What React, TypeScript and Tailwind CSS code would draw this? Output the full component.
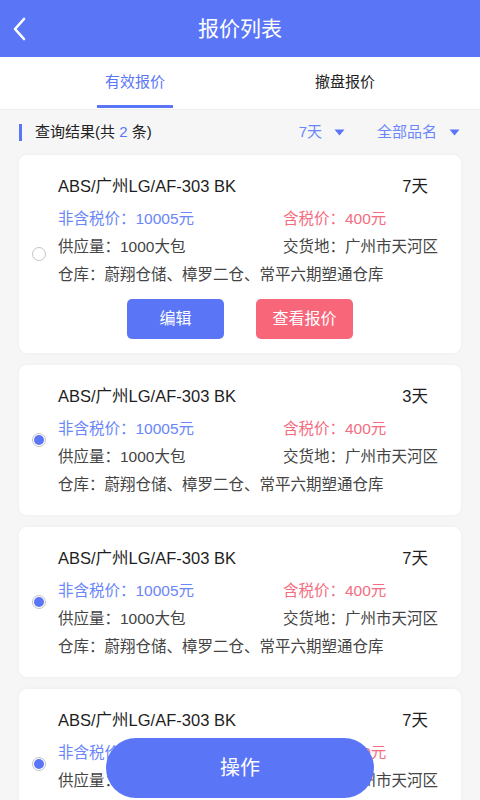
import React from "react";

const font = { fontFamily: '"Liberation Sans", "Noto Sans CJK SC", sans-serif' };

function Triangle() {
  return (
    <svg width="11" height="7" viewBox="0 0 11 7" className="ml-[12px]">
      <path d="M0.5 0.5 L10.5 0.5 L5.5 6.5 Z" fill="#5a76f7" />
    </svg>
  );
}

function Radio({ checked }: { checked: boolean }) {
  return (
    <div className="w-[14px] h-[14px] rounded-full border border-[#c4c4c4] bg-white flex items-center justify-center">
      {checked && <div className="w-[10px] h-[10px] rounded-full bg-[#5a76f7]" />}
    </div>
  );
}

function Card({ days, checked, buttons }: { days: string; checked: boolean; buttons?: boolean }) {
  return (
    <div className="bg-white rounded-[8px] shadow-[0_0_4px_rgba(0,0,0,0.04)] flex">
      <div className="w-[39px] shrink-0 flex items-center justify-center">
        <Radio checked={checked} />
      </div>
      <div className="flex-1 min-w-0 pt-[17px] pb-[14px] pr-[33px]">
        <div className="h-[28px] flex items-center justify-between text-[16.5px] text-[#1e1e1e]">
          <span>ABS/广州LG/AF-303 BK</span>
          <span>{days}</span>
        </div>
        <div className="mt-[5px] grid grid-cols-[225px_1fr] text-[15.5px] whitespace-nowrap">
          <div className="h-[28px] flex items-center text-[#6a86f7]">非含税价：10005元</div>
          <div className="h-[28px] flex items-center text-[#f46d7f]">含税价：400元</div>
          <div className="h-[28px] flex items-center text-[#444]">供应量：1000大包</div>
          <div className="h-[28px] flex items-center text-[#444]">交货地：广州市天河区</div>
          <div className="h-[28px] flex items-center text-[#444] col-span-2">仓库：蔚翔仓储、樟罗二仓、常平六期塑通仓库</div>
        </div>
        {buttons ? (
          <div className="mt-[10px] flex pl-[69px] gap-[32px]">
            <div className="w-[97px] h-[40px] rounded-[5px] bg-[#5a76f7] text-white text-[16px] flex items-center justify-center">编辑</div>
            <div className="w-[97px] h-[40px] rounded-[5px] bg-[#f8667a] text-white text-[16px] flex items-center justify-center">查看报价</div>
          </div>
        ) : (
          <div className="h-[2px]" />
        )}
      </div>
    </div>
  );
}

export default function App() {
  return (
    <div style={font} className="w-[480px] h-[800px] overflow-hidden bg-[#f6f6f7] relative">
      <div className="h-[57px] bg-[#5a76f7] flex items-center justify-center relative">
        <svg width="16" height="26" viewBox="0 0 16 26" className="absolute left-[11px] top-[16px]">
          <path d="M13 3 L4 13 L13 23" stroke="white" strokeWidth="2.6" fill="none" strokeLinecap="round" strokeLinejoin="round" />
        </svg>
        <span className="text-white text-[21px]">报价列表</span>
      </div>
      <div className="h-[53px] bg-white flex border-b border-[#eeeeee]">
        <div className="w-[270px] flex justify-center">
          <div className="w-[76px] flex flex-col items-center justify-between">
            <span className="text-[15px] text-[#5a76f7] mt-[14px]">有效报价</span>
            <div className="h-[3px] w-full bg-[#5a76f7] mb-[1px]" />
          </div>
        </div>
        <div className="w-[150px] flex justify-center">
          <span className="text-[15px] text-[#222] mt-[14px]">撤盘报价</span>
        </div>
      </div>
      <div className="h-[44px] flex items-center pl-[19px] pr-[20px]">
        <div className="w-[3px] h-[17px] bg-[#5a76f7]" />
        <span className="ml-[13px] text-[15px] text-[#222]">
          查询结果(共 <span className="text-[#5a76f7]">2</span> 条)
        </span>
        <div className="ml-auto flex items-center text-[15px] text-[#6a86f7]">
          <span>7天</span>
          <Triangle />
          <span className="ml-[32px]">全部品名</span>
          <Triangle />
        </div>
      </div>
      <div className="px-[19px] flex flex-col gap-[12px] mt-[1px]">
        <Card days="7天" checked={false} buttons />
        <Card days="3天" checked />
        <Card days="7天" checked />
        <Card days="7天" checked />
      </div>
      <div className="absolute left-[106px] bottom-[2px] w-[268px] h-[60px] rounded-full bg-[#5a76f7] flex items-center justify-center text-white text-[20px]">
        操作
      </div>
    </div>
  );
}
